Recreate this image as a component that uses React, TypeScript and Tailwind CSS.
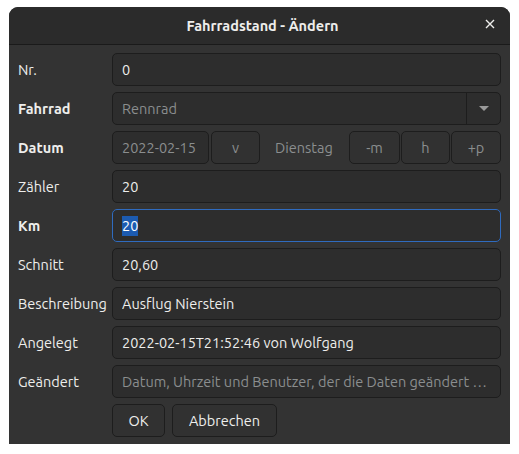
import React from 'react';

const FONT = "font-['Ubuntu','Noto_Sans','Open_Sans',sans-serif]";

const fieldBase =
  'h-[33px] rounded-[5px] border border-[#1d1d1d] bg-[#2d2d2d] px-[9px] flex items-center text-[14.5px]';

const Label: React.FC<{ text: string; bold?: boolean }> = ({ text, bold }) => (
  <div className={`h-[33px] flex items-center text-[14.5px] text-[#eeeeec] ${bold ? 'font-bold' : ''}`}>
    {text}
  </div>
);

const Field: React.FC<{ value: string; dim?: boolean; className?: string }> = ({ value, dim, className }) => (
  <div
    className={`${fieldBase} ${dim ? 'text-[#8b8e8f]' : 'text-[#eeeeec]'} overflow-hidden whitespace-nowrap ${
      className || ''
    }`}
  >
    <span className="truncate">{value}</span>
  </div>
);

const SmallButton: React.FC<{ text: string; className?: string; dim?: boolean }> = ({ text, className, dim }) => (
  <div
    className={`h-[33px] rounded-[5px] border border-[#1d1d1d] bg-[#313131] flex items-center justify-center text-[14.5px] ${
      dim ? 'text-[#8b8e8f]' : 'text-[#eeeeec]'
    } ${className || ''}`}
  >
    {text}
  </div>
);

const App: React.FC = () => {
  return (
    <div className={`w-[519px] h-[454px] bg-white pt-[7px] pl-[9px] ${FONT}`}>
      <div className="w-[501px] h-[437px] flex flex-col bg-[#333333] rounded-t-[9px] overflow-hidden">
        {/* title bar */}
        <div className="h-[38px] shrink-0 bg-[#2b2b2b] border-b border-[#1a1a1a] flex items-center relative">
          <div className="flex-1 text-center text-[14.5px] font-bold text-[#eeeeec] pl-[6px]">
            Fahrradstand - Ändern
          </div>
          <div className="absolute right-[12px] top-[9px] w-[16px] h-[16px] flex items-center justify-center">
            <svg width="10" height="10" viewBox="0 0 10 10">
              <path d="M1 1 L9 9 M9 1 L1 9" stroke="#eeeeec" strokeWidth="1.4" />
            </svg>
          </div>
        </div>

        {/* form */}
        <div className="grid grid-cols-[94px_1fr] gap-y-[6px] px-[9px] pt-[8px]">
          <Label text="Nr." />
          <Field value="0" />

          <Label text="Fahrrad" bold />
          <div className={`${fieldBase} !px-0 text-[#8b8e8f]`}>
            <span className="flex-1 pl-[9px]">Rennrad</span>
            <div className="w-[34px] h-full border-l border-[#1d1d1d] flex items-center justify-center">
              <svg width="10" height="6" viewBox="0 0 10 6">
                <path d="M0 0 L10 0 L5 5 Z" fill="#9a9a9a" />
              </svg>
            </div>
          </div>

          <Label text="Datum" bold />
          <div className="flex items-center">
            <Field value="2022-02-15" dim className="w-[97px] shrink-0" />
            <SmallButton text="v" dim className="w-[49px] ml-[2px]" />
            <div className="flex-1 pl-[15px] text-[14.5px] text-[#8b8e8f]">Dienstag</div>
            <SmallButton text="-m" dim className="w-[51px]" />
            <SmallButton text="h" dim className="w-[49px] ml-[1px]" />
            <SmallButton text="+p" dim className="w-[50px] ml-[1px]" />
          </div>

          <Label text="Zähler" />
          <Field value="20" />

          <Label text="Km" bold />
          <div className={`${fieldBase} !border-[#2f6bbf] text-[#ffffff]`}>
            <span className="bg-[#1c5bb1] leading-[20px]">20</span>
          </div>

          <Label text="Schnitt" />
          <Field value="20,60" />

          <Label text="Beschreibung" />
          <Field value="Ausflug Nierstein" />

          <Label text="Angelegt" />
          <Field value="2022-02-15T21:52:46 von Wolfgang" />

          <Label text="Geändert" />
          <Field value="Datum, Uhrzeit und Benutzer, der die Daten geändert …" dim />

          <div />
          <div className="flex gap-[7px]">
            <SmallButton text="OK" className="w-[53px]" />
            <SmallButton text="Abbrechen" className="w-[105px]" />
          </div>
        </div>
      </div>
    </div>
  );
};

export default App;
